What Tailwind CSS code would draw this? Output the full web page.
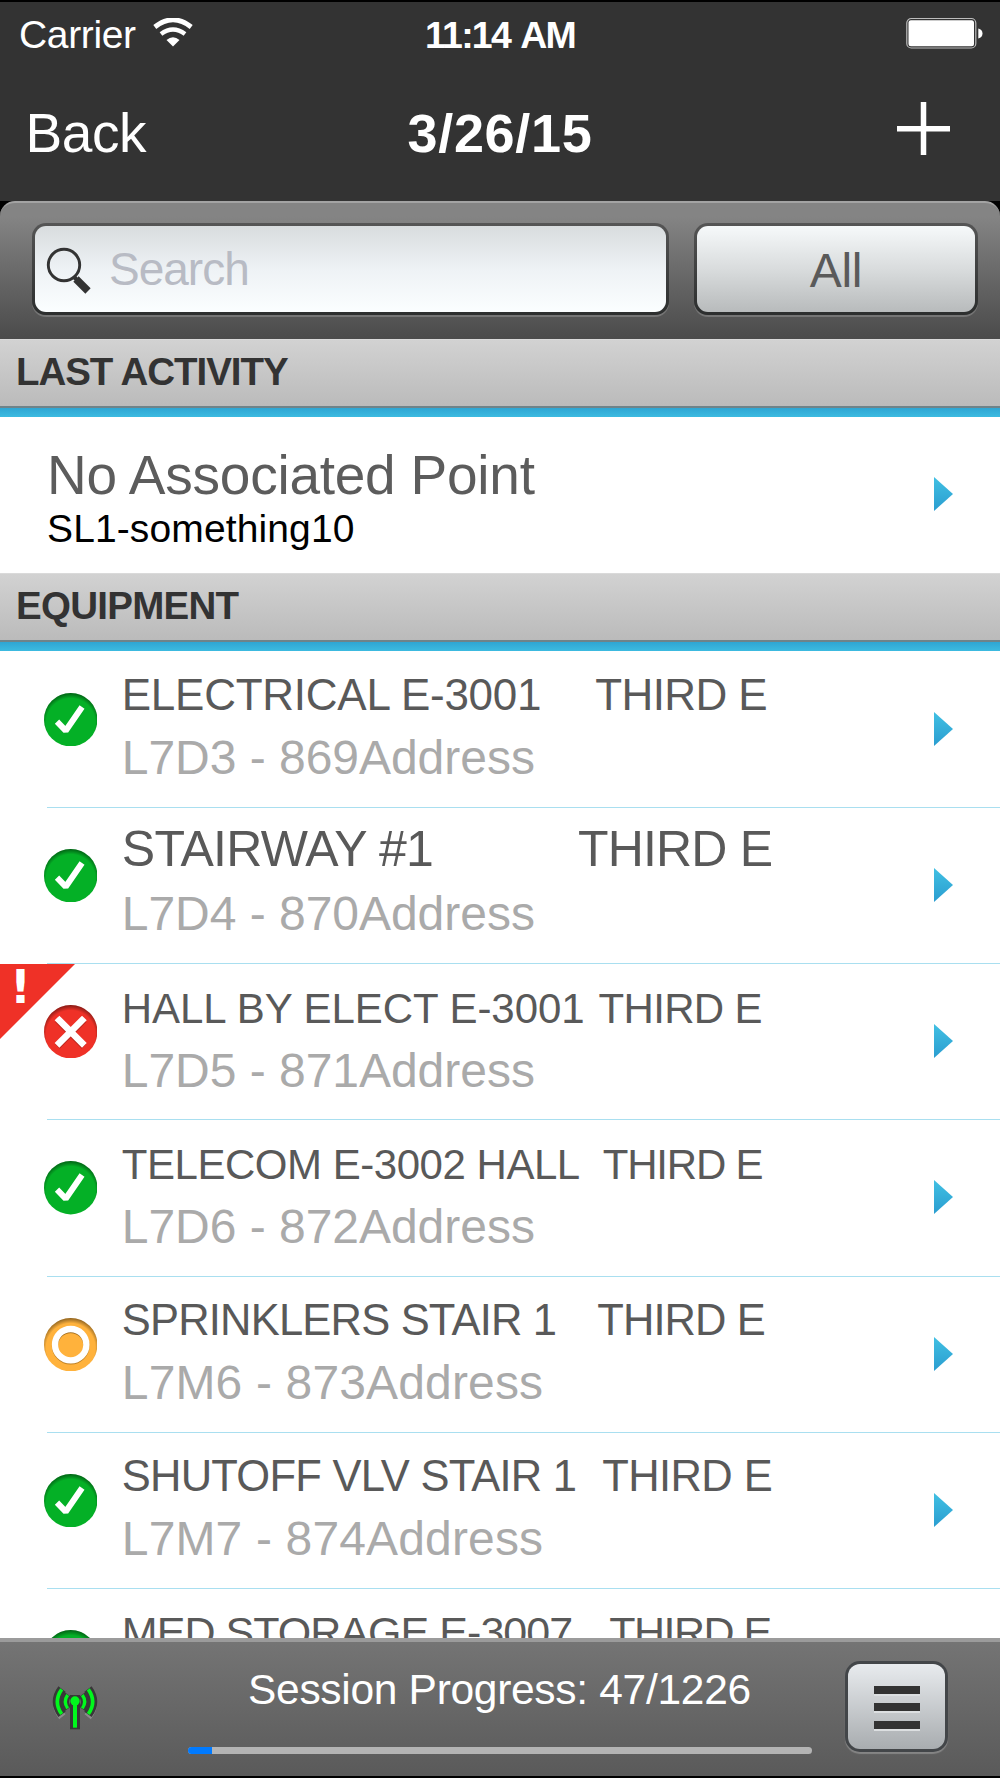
<!DOCTYPE html>
<html lang="en">
<head>
  <meta charset="UTF-8" />
  <meta name="viewport" content="width=device-width, initial-scale=1.0"/>
  <title>Session 3/26/15</title>
  <script src="https://cdn.jsdelivr.net/npm/@tailwindcss/browser@4"></script>
</head>
<body class="bg-black font-['Liberation_Sans',Arial,sans-serif]">

  <div class="w-[1000px] h-[1778px] flex flex-col overflow-hidden whitespace-nowrap border-y-2 border-black">

    <!-- status bar + nav bar -->
    <header class="h-[199px] shrink-0 bg-[#333333] text-white">
      <div class="grid grid-cols-3 h-[64px]">
        <div class="flex items-start pl-[19px] gap-[17px]">
          <span class="text-[39px] leading-[66px] tracking-[-0.36px]">Carrier</span>
          <svg class="w-[40px] h-[29px] mt-[16px]" viewBox="0 0 40 29">
            <path d="M1.8 9 Q20 -5.500 38.200 9" fill="none" stroke="#fff" stroke-width="4.800"/>
            <path d="M8 16 Q20 7 32 16" fill="none" stroke="#fff" stroke-width="4.500"/>
            <path d="M13.500 22 Q20 16.500 26.500 22 L20 28.500 Z" fill="#fff"/>
          </svg>
        </div>
        <div class="text-center text-[37.5px] leading-[66px] font-bold tracking-[-1.8px] [word-spacing:3px]">11:14 AM</div>
        <div class="flex justify-end pr-[17px] pt-[15px]">
          <svg class="w-[78px] h-[33px]" viewBox="0 0 78 33">
            <rect x="1.800" y="1.500" width="69" height="29.500" rx="4.500" fill="none" stroke="#bdbdbd" stroke-width="1.200"/>
            <rect x="3.500" y="3.200" width="65.500" height="26" rx="2.500" fill="#fff"/>
            <path d="M73.300 11.500 Q77.500 12.500 77.500 16.500 Q77.500 20.500 73.300 21.500 Z" fill="#fff"/>
          </svg>
        </div>
      </div>
      <div class="grid grid-cols-3 h-[134px]">
        <div class="pl-[25.500px] text-[55px] leading-[134px] tracking-[-0.42px]">Back</div>
        <div class="text-center text-[54px] leading-[134px] font-bold tracking-[0.7px]">3/26/15</div>
        <div class="flex justify-end pr-[50px] pt-[36px]">
          <svg class="w-[53px] h-[53px]" viewBox="0 0 53 53" stroke="#fff" stroke-width="5.500">
            <path d="M26.500 0V53M0 26.700H53"/>
          </svg>
        </div>
      </div>
    </header>

    <!-- search bar -->
    <div class="h-[138px] shrink-0 rounded-t-[15px] border-t-2 border-[#a3a3a3] bg-linear-to-b from-[#848484] from-10% to-[#4b4b4b] flex items-start gap-[25px] pl-[32px] pr-[22px] pt-[20px]">
      <div class="w-[637px] h-[92px] rounded-[14px] bg-linear-to-b from-[#555555] to-[#2c2e2e] p-[3px] shadow-[0_2px_0_#757575]">
        <div class="h-full rounded-[11px] bg-linear-to-b from-[#d8dcde] via-[#eef2f5] to-[#fbfeff] flex items-start">
          <svg class="w-[46px] h-[48px] ml-[11px] mt-[21px]" viewBox="0 0 46 48">
            <circle cx="18" cy="18" r="15.700" fill="none" stroke="#333" stroke-width="2.900"/>
            <path d="M28 30L33 35" stroke="#333" stroke-width="4"/>
            <path d="M30 32L42 44" stroke="#333" stroke-width="7.500"/>
          </svg>
          <span class="ml-[17px] text-[46px] leading-[87px] tracking-[-1px] text-[#b8bbc4]">Search</span>
        </div>
      </div>
      <div class="w-[284px] h-[92px] rounded-[14px] bg-linear-to-b from-[#555555] to-[#2c2e2e] p-[3px] shadow-[0_2px_0_#757575]">
        <div class="h-full rounded-[11px] bg-linear-to-b from-[#f6f9fa] via-[#d9dcdd] to-[#b8bbbc] text-center text-[48px] leading-[90px] tracking-[-0.34px] text-[#5a5a5a]">All</div>
      </div>
    </div>

    <h2 class="h-[78px] shrink-0 border-t border-[#dadada] bg-linear-to-b from-[#d2d2d2] to-[#b7b7b7] flex flex-col justify-between text-[#333333]">
      <span class="pl-[16px] text-[38.5px] leading-[63px] font-bold tracking-[-1.05px]">LAST ACTIVITY</span>
      <span class="h-[11px] border-t-2 border-[#6f8389] bg-linear-to-b from-[#2fa5d3] to-[#3cbbe0]"></span>
    </h2>

    <div class="h-[156.250px] shrink-0 bg-white flex items-start justify-between pr-[47px]">
      <div class="flex flex-col pt-[28px]">
        <span class="pl-[47px] text-[55px] leading-[60px] tracking-[-0.24px] text-[#5c5c5c]">No Associated Point</span>
        <span class="pl-[47px] text-[39px] leading-[48px] tracking-[0.12px] text-black">SL1-something10</span>
      </div>
      <svg class="w-[19px] h-[34px] mt-[60px]" viewBox="0 0 19 34"><path d="M0 0L19 17L0 34Z" fill="url(#arrow)"/></svg>
    </div>

    <h2 class="h-[77.750px] shrink-0 border-t border-[#dadada] bg-linear-to-b from-[#d2d2d2] to-[#b7b7b7] flex flex-col justify-between text-[#333333]">
      <span class="pl-[16px] text-[38.5px] leading-[63px] font-bold tracking-[-0.72px]">EQUIPMENT</span>
      <span class="h-[11px] border-t-2 border-[#6f8389] bg-linear-to-b from-[#2fa5d3] to-[#3cbbe0]"></span>
    </h2>

    <ul id="equipment" class="h-[987px] shrink-0 overflow-hidden bg-white pt-[0.5px]"></ul>

    <!-- session footer -->
    <footer class="h-[138px] shrink-0 border-t-4 border-[#9b9b9b] bg-linear-to-b from-[#747474] to-[#5a5a5a] flex items-start">
      <svg class="w-[48px] h-[52px] ml-[51px] mt-[41px]" viewBox="153 309 144 156" fill="none">
        <g stroke="#fff" stroke-opacity=".25" stroke-width="24" transform="translate(0 6)">
          <path d="M187 326Q156 365 187 404M263 326Q294 365 263 404"/>
          <path d="M225 362V441"/>
        </g>
        <g stroke="#383838">
          <path stroke-width="27" d="M186 327Q158 365 186 403M264 327Q292 365 264 403"/>
          <path stroke-width="24" d="M203 343Q187 365 203 387M247 343Q263 365 247 387"/>
          <path stroke-width="30" d="M225 345V448"/>
        </g>
        <g stroke="#00f81c">
          <path stroke-width="11" d="M185 328Q159 365 185 402M265 328Q291 365 265 402"/>
          <path stroke-width="10" d="M203 345Q189 365 203 385M247 345Q261 365 247 385"/>
          <path stroke-width="12" d="M225 362V443"/>
        </g>
        <circle cx="225" cy="363" r="14" fill="#00f81c"/>
      </svg>
      <div class="ml-[89px] w-[624px] flex flex-col">
        <span class="pl-[60px] pt-[20px] text-[42.500px] leading-[56px] tracking-[-0.3px] text-white">Session Progress: 47/1226</span>
        <div class="mt-[29px] h-[7px] rounded-full bg-[#b4b4b4] overflow-hidden">
          <div class="h-full bg-[#007aff]" style="width: 3.900%"></div>
        </div>
      </div>
      <div class="ml-[33px] mt-[19px] w-[103px] h-[91px] rounded-[15px] bg-[#434649] p-[3px] shadow-[0_2px_1px_#858585]">
        <div class="h-full rounded-[12px] bg-linear-to-b from-[#e8ebee] to-[#a9adb0] flex flex-col items-center gap-[9.3px] pt-[22px]">
          <span class="w-[46px] h-[8px] bg-[#333333] shadow-[0_2px_0_#dcdfe1]"></span>
          <span class="w-[46px] h-[8px] bg-[#333333] shadow-[0_2px_0_#dcdfe1]"></span>
          <span class="w-[46px] h-[8px] bg-[#333333] shadow-[0_2px_0_#dcdfe1]"></span>
        </div>
      </div>
    </footer>
  </div>

  <svg class="absolute w-0 h-0">
    <defs>
      <linearGradient id="arrow" x1="0" y1="0" x2="0" y2="1">
        <stop offset="0" stop-color="#41c0e3"/><stop offset="1" stop-color="#2a9dd0"/>
      </linearGradient>
      <!-- dark inner edge along the top of each status badge -->
      <radialGradient id="rim" cx=".5" cy=".56" r=".56">
        <stop offset=".82" stop-color="#000" stop-opacity="0"/><stop offset="1" stop-color="#000" stop-opacity=".45"/>
      </radialGradient>
    </defs>
  </svg>

  <script>
    const icons = {
      pass: '<circle cx="80" cy="80" r="80" fill="#04b026"/><circle cx="80" cy="80" r="80" fill="url(#rim)"/><path d="M39 86L65 113L114 42" fill="none" stroke="#fff" stroke-width="18" stroke-linejoin="bevel"/>',
      fail: '<circle cx="80" cy="80" r="80" fill="#ef3127"/><circle cx="80" cy="80" r="80" fill="url(#rim)"/><path d="M40 44L120 124M120 44L40 124" stroke="#8a1a14" stroke-opacity=".5" stroke-width="20"/><path d="M39 39L121 121M121 39L39 121" stroke="#fff" stroke-width="20"/>',
      partial: '<circle cx="80" cy="80" r="80" fill="#ffb23c"/><circle cx="80" cy="80" r="80" fill="url(#rim)"/><circle cx="80" cy="83" r="47" fill="none" stroke="#8a5a10" stroke-opacity=".55" stroke-width="19"/><circle cx="80" cy="84" r="36" fill="#ffb23c"/><circle cx="80" cy="80" r="42" fill="url(#rim)"/><circle cx="80" cy="80" r="47" fill="none" stroke="#fff" stroke-width="19"/>'
    };

    const rows = [
      { icon: 'pass', name: 'ELECTRICAL E-3001', nameCls: 'text-[44px] leading-[62px] tracking-[-0.26px]', floor: 'THIRD E', floorCls: 'ml-[54px] tracking-[-0.6px]', sub: 'L7D3 - 869Address' },
      { icon: 'pass', name: 'STAIRWAY #1', nameCls: 'text-[50px] leading-[58px] tracking-[-0.75px]', floor: 'THIRD E', floorCls: 'ml-[145px] tracking-[-0.85px]', sub: 'L7D4 - 870Address' },
      { icon: 'fail', alert: true, name: 'HALL BY ELECT E-3001', nameCls: 'text-[42px] leading-[64px] tracking-[-0.05px]', floor: 'THIRD E', floorCls: 'ml-[14px] tracking-[-0.7px]', sub: 'L7D5 - 871Address' },
      { icon: 'pass', name: 'TELECOM E-3002 HALL', nameCls: 'text-[42px] leading-[64px] tracking-[-0.47px]', floor: 'THIRD E', floorCls: 'ml-[23px] tracking-[-1.2px]', sub: 'L7D6 - 872Address' },
      { icon: 'partial', name: 'SPRINKLERS STAIR 1', nameCls: 'text-[43.5px] leading-[62px] tracking-[-0.8px]', floor: 'THIRD E', floorCls: 'ml-[41px] tracking-[-0.9px]', sub: 'L7M6 - 873Address' },
      { icon: 'pass', name: 'SHUTOFF VLV STAIR 1', nameCls: 'text-[43.5px] leading-[62px] tracking-[-0.76px]', floor: 'THIRD E', floorCls: 'ml-[26px] tracking-[-0.6px]', sub: 'L7M7 - 874Address' },
      { icon: 'pass', name: 'MED STORAGE E-3007', nameCls: 'text-[43px] leading-[61px] tracking-[-0.95px]', floor: 'THIRD E', floorCls: 'ml-[37px] tracking-[-1.5px]', sub: '' }
    ];

    const alertFlag = '<svg class="absolute left-0 top-0 w-[75px] h-[75px]" viewBox="0 0 75 75"><path d="M0 0H75L0 75Z" fill="#ef3127"/><text x="10" y="38.5" font-family="DejaVu Sans" font-weight="bold" font-size="46" fill="#fff">!</text></svg>';

    document.getElementById('equipment').innerHTML = rows.map(r => `
      <li class="relative h-[156.25px]">
        ${r.alert ? alertFlag : ''}
        <div class="ml-[47px] h-full border-b border-[#a9dff0] flex items-start pr-[47px]">
          <svg class="relative -ml-[3px] mt-[41px] w-[53.4px] h-[53.4px] shrink-0" viewBox="0 0 160 160">${icons[r.icon]}</svg>
          <div class="ml-[24.4px] flex-1 pt-[12.5px]">
            <div class="h-[60px] flex items-start text-[#595959] ${r.nameCls}"><span>${r.name}</span><span class="${r.floorCls}">${r.floor}</span></div>
            <div class="mt-[6px] text-[48px] leading-[56px] text-[#aaaaaa] ${r.sub.includes('M') ? 'tracking-[0.15px]' : 'tracking-[-0.03px]'}">${r.sub}</div>
          </div>
          <svg class="w-[19px] h-[34px] mt-[60px] shrink-0" viewBox="0 0 19 34"><path d="M0 0L19 17L0 34Z" fill="url(#arrow)"/></svg>
        </div>
      </li>`).join('');
  </script>
</body>
</html>
